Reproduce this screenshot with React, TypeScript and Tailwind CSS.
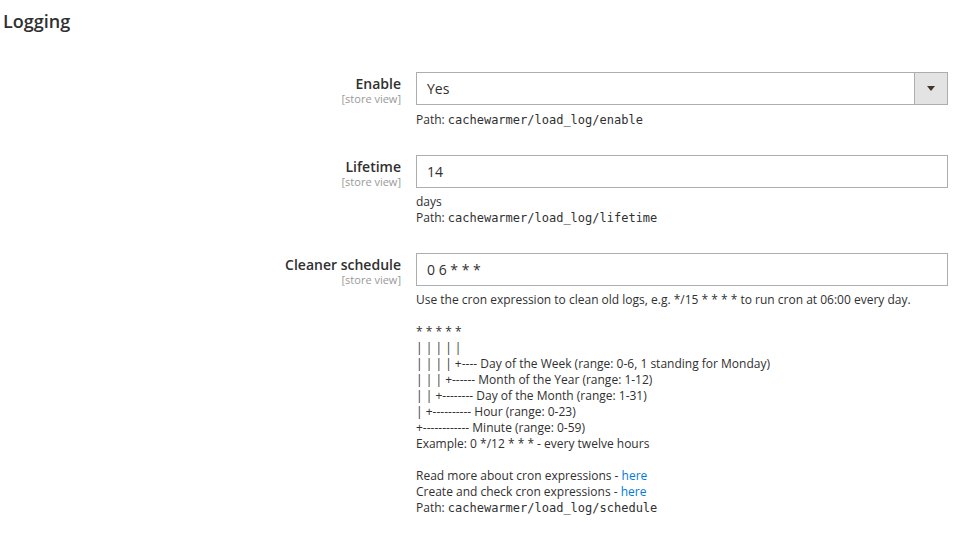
import React from "react";

const mono = "font-['DejaVu_Sans_Mono','Liberation_Mono',monospace] text-[12px]";

function Label({ title }: { title: string }) {
  return (
    <div className="flex flex-col items-end pt-[2px] text-right">
      <span className="text-[14px] font-semibold leading-[19px] text-[#303030]">
        {title}
      </span>
      <span className="text-[11px] leading-[11px] text-[#999999]">
        [store view]
      </span>
    </div>
  );
}

function PathNote({ path }: { path: string }) {
  return (
    <div>
      Path: <span className={mono}>{path}</span>
    </div>
  );
}

const inputCls =
  "h-[33px] w-full border border-[#adadad] bg-white px-[10px] text-[14px] leading-[32px] text-[#303030]";

const cronLines = [
  "* * * * *",
  "| | | | |",
  "| | | | +---- Day of the Week (range: 0-6, 1 standing for Monday)",
  "| | | +------ Month of the Year (range: 1-12)",
  "| | +-------- Day of the Month (range: 1-31)",
  "| +---------- Hour (range: 0-23)",
  "+------------ Minute (range: 0-59)",
  "Example: 0 */12 * * * - every twelve hours",
];

export default function App() {
  return (
    <main className="min-h-[539px] w-[978px] bg-white font-['Open_Sans',sans-serif] text-[#303030]">
      <h2 className="px-[3px] pt-[9px] text-[18px] font-semibold leading-[24px] text-[#303030]">
        Logging
      </h2>

      <section className="mt-[39px] grid grid-cols-[401px_532px] gap-x-[15px] gap-y-[27px]">
        {/* Enable */}
        <Label title="Enable" />
        <div>
          <div className="flex h-[33px] border border-[#adadad] bg-white">
            <div className="flex-1 px-[10px] text-[14px] leading-[32px]">Yes</div>
            <div className="flex w-[33px] items-center justify-center border-l border-[#adadad] bg-[#e3e3e3]">
              <span className="h-0 w-0 border-x-[4px] border-t-[5px] border-x-transparent border-t-[#41362f]" />
            </div>
          </div>
          <div className="mt-[7px] text-[12px] leading-[16px]">
            <PathNote path="cachewarmer/load_log/enable" />
          </div>
        </div>

        {/* Lifetime */}
        <Label title="Lifetime" />
        <div>
          <div className={inputCls}>14</div>
          <div className="mt-[6px] text-[12px] leading-[16px]">
            <div>days</div>
            <PathNote path="cachewarmer/load_log/lifetime" />
          </div>
        </div>

        {/* Cleaner schedule */}
        <Label title="Cleaner schedule" />
        <div>
          <div className={inputCls}>0 6 * * *</div>
          <div className="mt-[6px] text-[12px] leading-[16px]">
            <div>
              Use the cron expression to clean old logs, e.g. */15 * * * * to run cron at 06:00 every day.
            </div>
            <div className="h-[16px]" />
            {cronLines.map((l) => (
              <div key={l}>{l}</div>
            ))}
            <div className="h-[16px]" />
            <div>
              Read more about cron expressions - <a className="text-[#007bdb]">here</a>
            </div>
            <div>
              Create and check cron expressions - <a className="text-[#007bdb]">here</a>
            </div>
            <PathNote path="cachewarmer/load_log/schedule" />
          </div>
        </div>
      </section>
    </main>
  );
}
